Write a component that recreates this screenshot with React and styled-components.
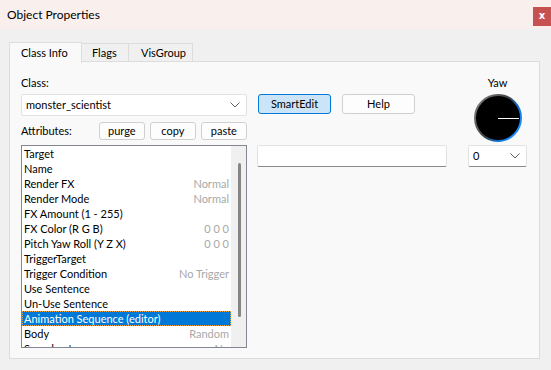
import React from "react";
import styled, { createGlobalStyle } from "styled-components";

const Global = createGlobalStyle`
  html, body { margin: 0; padding: 0; background: #f0f0f0; }
  body { font-family: "Lato", "Noto Sans", sans-serif; font-size: 11px; color: #000; }
  * { box-sizing: border-box; }
`;

const Window = styled.div`
  width: 551px;
  height: 370px;
  display: flex;
  flex-direction: column;
  background: #f0f0f0;
  overflow: hidden;
`;

const TitleBar = styled.div`
  height: 29px;
  background: #f9efed;
  display: flex;
  align-items: flex-start;
  padding-left: 7px;
`;

const Title = styled.div`
  font-size: 12px;
  line-height: 16px;
  margin-top: 7px;
`;

const CloseButton = styled.div`
  margin-left: auto;
  margin-top: 7px;
  width: 18px;
  height: 19px;
  background: #c75050;
  color: #fff;
  font-weight: bold;
  font-size: 10px;
  line-height: 18px;
  text-align: center;
  font-family: "DejaVu Sans", sans-serif;
`;

const Body = styled.div`
  flex: 1;
  padding: 12px 12px 11px 9px;
  display: flex;
  flex-direction: column;
`;

const TabStrip = styled.div`
  display: flex;
  align-items: flex-end;
  height: 21px;
  position: relative;
  z-index: 1;
`;

const Tab = styled.div`
  width: ${(p) => p.$w}px;
  height: ${(p) => (p.$active ? 21 : 19)}px;
  padding-left: ${(p) => p.$pad}px;
  line-height: ${(p) => (p.$active ? 20 : 18)}px;
  background: ${(p) => (p.$active ? "#f9f9f9" : "#f0f0f0")};
  border: 1px solid #dcdcdc;
  border-bottom: ${(p) => (p.$active ? "none" : "1px solid #dcdcdc")};
  margin-bottom: ${(p) => (p.$active ? -1 : 0)}px;
  margin-left: ${(p) => (p.$first ? 0 : -1)}px;
  position: relative;
  z-index: ${(p) => (p.$active ? 2 : 1)};
`;

const Panel = styled.div`
  width: 531px;
  height: 298px;
  margin-top: -1px;
  background: #f9f9f9;
  border: 1px solid #dcdcdc;
  display: flex;
  padding: 13px 0 0 11px;
`;

const LeftCol = styled.div`
  width: 226px;
  display: flex;
  flex-direction: column;
`;

const MidCol = styled.div`
  width: 190px;
  margin-left: 10px;
  display: flex;
  flex-direction: column;
  padding-top: 19px;
`;

const RightCol = styled.div`
  width: 59px;
  margin-left: 21px;
  display: flex;
  flex-direction: column;
  align-items: center;
`;

const Label = styled.div`
  line-height: 16px;
  height: 16px;
`;

const Combo = styled.div`
  height: 22px;
  width: ${(p) => p.$w}px;
  margin-top: ${(p) => p.$mt || 0}px;
  background: #fff;
  border: 1px solid #e2e2e2;
  border-bottom-color: ${(p) => (p.$dark ? "#8a8a8a" : "#e2e2e2")};
  border-radius: 2px;
  display: flex;
  align-items: center;
  padding: 0 0 0 4px;
`;

const ComboText = styled.div`
  flex: 1;
  line-height: 20px;
`;

const Chevron = styled.svg`
  width: 10px;
  height: 6px;
  margin-right: 6px;
`;

const ToolRow = styled.div`
  display: flex;
  align-items: center;
  margin-top: 6px;
  height: 17px;
`;

const SmallButton = styled.div`
  width: 46px;
  height: 18px;
  margin-left: ${(p) => p.$ml}px;
  background: #fdfdfd;
  border: 1px solid #d0d0d0;
  border-radius: 3px;
  text-align: center;
  line-height: 16px;
`;

const ListBox = styled.div`
  margin-top: 6px;
  height: 203px;
  background: #fff;
  border: 1px solid #828790;
  display: flex;
  overflow: hidden;
`;

const Rows = styled.div`
  flex: 1;
`;

const Row = styled.div`
  height: 15px;
  line-height: 15px;
  display: flex;
  justify-content: space-between;
  padding: 0 2px 0 2px;
  background: ${(p) => (p.$sel ? "#0078d7" : "transparent")};
  color: ${(p) => (p.$sel ? "#fff" : "#000")};
  outline: ${(p) => (p.$sel ? "1px dotted #f2a33a" : "none")};
  outline-offset: -1px;
  white-space: nowrap;
  overflow: hidden;
`;

const Value = styled.span`
  color: #a8a8a8;
`;

const ScrollTrack = styled.div`
  width: 15px;
  background: #f0f0f0;
  display: flex;
  justify-content: center;
  padding-top: 17px;
`;

const Thumb = styled.div`
  width: 3px;
  height: 154px;
  background: #858585;
  border-radius: 1.5px;
  margin-left: 1px;
`;

const Button = styled.div`
  width: 73px;
  height: 20px;
  border-radius: 3px;
  text-align: center;
  line-height: 18px;
  border: 1px solid ${(p) => (p.$primary ? "#0078d7" : "#d0d0d0")};
  background: ${(p) => (p.$primary ? "#cce4f7" : "#fdfdfd")};
`;

const ButtonRow = styled.div`
  display: flex;
  gap: 11px;
  padding-left: 1px;
`;

const TextInput = styled.div`
  margin-top: 31px;
  height: 22px;
  width: 190px;
  background: #fff;
  border: 1px solid #e2e2e2;
  border-bottom-color: #8a8a8a;
  border-radius: 2px;
`;

const Dial = styled.svg`
  width: 48px;
  height: 48px;
  margin-top: 3px;
  display: block;
`;

const rows = [
  ["Target", ""],
  ["Name", ""],
  ["Render FX", "Normal"],
  ["Render Mode", "Normal"],
  ["FX Amount (1 - 255)", ""],
  ["FX Color (R G B)", "0 0 0"],
  ["Pitch Yaw Roll (Y Z X)", "0 0 0"],
  ["TriggerTarget", ""],
  ["Trigger Condition", "No Trigger"],
  ["Use Sentence", ""],
  ["Un-Use Sentence", ""],
  ["Animation Sequence (editor)", ""],
  ["Body", "Random"],
  ["Squadmate", "No"],
];

const ChevronIcon = () => (
  <Chevron viewBox="0 0 10 6">
    <path d="M0.5 0.5 L5 5 L9.5 0.5" fill="none" stroke="#606060" strokeWidth="1" />
  </Chevron>
);

export default function App() {
  return (
    <>
      <Global />
      <Window>
        <TitleBar>
          <Title>Object Properties</Title>
          <CloseButton>x</CloseButton>
        </TitleBar>
        <Body>
          <TabStrip>
            <Tab $active $first $w={73} $pad={11}>Class Info</Tab>
            <Tab $w={48} $pad={10}>Flags</Tab>
            <Tab $w={65} $pad={12}>VisGroup</Tab>
          </TabStrip>
          <Panel>
            <LeftCol>
              <Label>Class:</Label>
              <Combo $w={226} $mt={3}>
                <ComboText>monster_scientist</ComboText>
                <ChevronIcon />
              </Combo>
              <ToolRow>
                <Label>Attributes:</Label>
                <SmallButton $ml={27}>purge</SmallButton>
                <SmallButton $ml={5}>copy</SmallButton>
                <SmallButton $ml={5}>paste</SmallButton>
              </ToolRow>
              <ListBox>
                <Rows>
                  {rows.map(([k, v], i) => (
                    <Row key={k} $sel={i === 11}>
                      <span>{k}</span>
                      {v && <Value>{v}</Value>}
                    </Row>
                  ))}
                </Rows>
                <ScrollTrack>
                  <Thumb />
                </ScrollTrack>
              </ListBox>
            </LeftCol>
            <MidCol>
              <ButtonRow>
                <Button $primary>SmartEdit</Button>
                <Button>Help</Button>
              </ButtonRow>
              <TextInput />
            </MidCol>
            <RightCol>
              <Label>Yaw</Label>
              <Dial viewBox="0 0 48 48">
                <defs>
                  <linearGradient id="ring" x1="0" y1="0" x2="1" y2="0.6">
                    <stop offset="0" stopColor="#8a8a8a" />
                    <stop offset="0.55" stopColor="#404040" />
                    <stop offset="0.8" stopColor="#0a6fd0" />
                    <stop offset="1" stopColor="#1a8cff" />
                  </linearGradient>
                </defs>
                <circle cx="24" cy="24" r="23" fill="#000" stroke="url(#ring)" strokeWidth="2" />
                <line x1="24" y1="24.5" x2="45" y2="24.5" stroke="#fff" strokeWidth="1" />
              </Dial>
              <Combo $w={59} $mt={3} $dark>
                <ComboText>0</ComboText>
                <ChevronIcon />
              </Combo>
            </RightCol>
          </Panel>
        </Body>
      </Window>
    </>
  );
}
